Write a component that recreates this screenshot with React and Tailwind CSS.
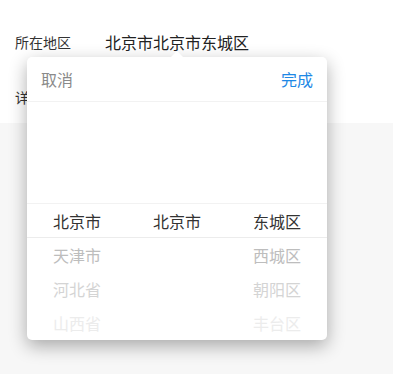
import React from "react";

const columns = [
  { items: ["北京市", "天津市", "河北省", "山西省"] },
  { items: ["北京市"] },
  { items: ["东城区", "西城区", "朝阳区", "丰台区"] },
];

const shades = ["text-[#333]", "text-[#bdbdbd]", "text-[#d4d4d4]", "text-[#ececec]"];

const App = () => {
  return (
    <div
      className="relative w-[393px] h-[374px] overflow-hidden bg-[#f7f7f7]"
      style={{ fontFamily: '"Noto Sans CJK SC", "Noto Sans", sans-serif' }}
    >
      <div className="bg-white h-[123px] pt-[31px]">
        <div className="flex items-center h-[22px] pl-[15px]">
          <span className="w-[90px] text-[14px] text-[#333]">所在地区</span>
          <span className="text-[16px] text-[#222]">北京市北京市东城区</span>
        </div>
        <div className="flex items-center h-[22px] pl-[15px] mt-[33px]">
          <span className="text-[14px] text-[#333]">详细地址</span>
        </div>
      </div>

      {/* popover */}
      <div className="absolute left-[27px] top-[57px] w-[300px] h-[283px] bg-white rounded-[5px] shadow-[0_6px_18px_rgba(0,0,0,0.32)]">
        <div className="absolute -top-[6px] left-[144px] w-0 h-0 border-l-[6px] border-r-[6px] border-b-[6px] border-l-transparent border-r-transparent border-b-white" />
        <div className="flex items-center justify-between h-[45px] px-[14px] border-b border-[#f2f2f2]">
          <span className="text-[16px] text-[#8a8a8a]">取消</span>
          <span className="text-[16px] text-[#1e88e5]">完成</span>
        </div>
        <div className="h-[102px] border-b border-[#f2f2f2]" />
        <div className="relative">
          <div className="absolute left-0 right-0 top-[33px] border-t border-[#ececec]" />
          <div className="grid grid-cols-3">
            {columns.map((col, ci) => (
              <div key={ci} className="flex flex-col items-center">
                {col.items.map((item, i) => (
                  <div
                    key={i}
                    className={`${i === 0 ? "h-[33px]" : "h-[34px] pt-[2px]"} flex items-center text-[16px] ${shades[i]}`}
                  >
                    {item}
                  </div>
                ))}
              </div>
            ))}
          </div>
        </div>
      </div>
    </div>
  );
};

export default App;
